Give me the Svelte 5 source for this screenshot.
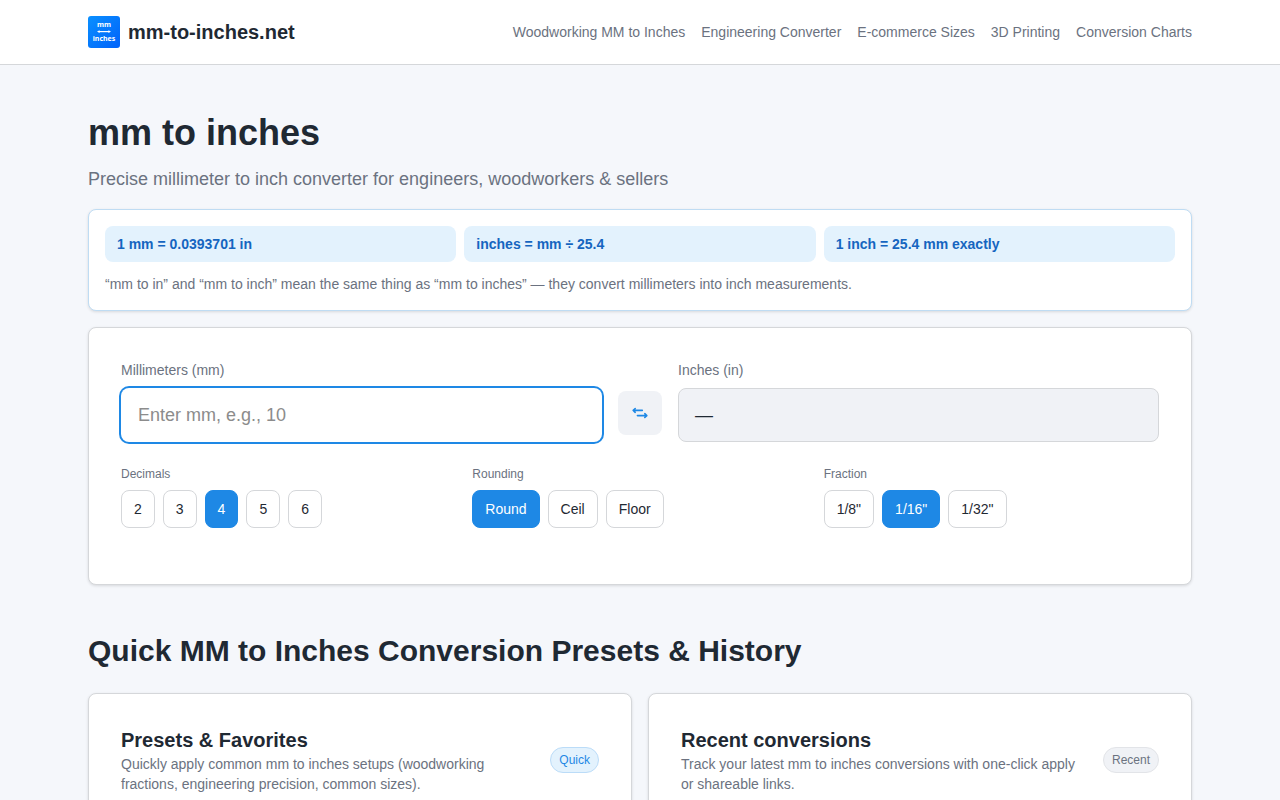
<script>
  const links = [
    "Woodworking MM to Inches",
    "Engineering Converter",
    "E-commerce Sizes",
    "3D Printing",
    "Conversion Charts",
  ];

  const facts = ["1 mm = 0.0393701 in", "inches = mm ÷ 25.4", "1 inch = 25.4 mm exactly"];

  const groups = [
    { key: "decimals", label: "Decimals", options: ["2", "3", "4", "5", "6"] },
    { key: "rounding", label: "Rounding", options: ["Round", "Ceil", "Floor"] },
    { key: "fraction", label: "Fraction", options: ['1/8"', '1/16"', '1/32"'] },
  ];

  const panels = [
    {
      title: "Presets & Favorites",
      text: "Quickly apply common mm to inches setups (woodworking fractions, engineering precision, common sizes).",
      badge: "Quick",
      accent: true,
    },
    {
      title: "Recent conversions",
      text: "Track your latest mm to inches conversions with one-click apply or shareable links.",
      badge: "Recent",
      accent: false,
    },
  ];

  let settings = $state({ decimals: "4", rounding: "Round", fraction: '1/16"' });
  let value = $state("");
  let reversed = $state(false);

  let output = $derived.by(() => {
    const n = parseFloat(value);
    if (isNaN(n)) return "—";
    const factor = 10 ** Number(settings.decimals);
    const raw = (reversed ? n * 25.4 : n / 25.4) * factor;
    const fn = Math[settings.rounding.toLowerCase()];
    return (fn(raw) / factor).toFixed(Number(settings.decimals));
  });
</script>

<div class="page">
  <header>
    <div class="container bar">
      <a class="brand" href="#top">
        <svg width="32" height="32" viewBox="0 0 32 32" aria-hidden="true">
          <defs>
            <linearGradient id="logo" x1="0" y1="0" x2="1" y2="1">
              <stop offset="0" stop-color="#0a90ff" />
              <stop offset="1" stop-color="#0062fa" />
            </linearGradient>
          </defs>
          <rect width="32" height="32" rx="3" fill="url(#logo)" />
          <text x="16" y="11.4" textLength="14" lengthAdjust="spacingAndGlyphs">mm</text>
          <path d="M10.5 15.6h11" stroke="#fff" stroke-width="1.2" />
          <path d="M9 15.6l2.6-1.4v2.8zM23 15.6l-2.6-1.4v2.8z" fill="#fff" />
          <text x="16" y="24.8" textLength="22.5" lengthAdjust="spacingAndGlyphs">inches</text>
        </svg>
        <span>mm-to-inches.net</span>
      </a>
      <nav>
        {#each links as link}
          <a href="#top">{link}</a>
        {/each}
      </nav>
    </div>
  </header>

  <main class="container">
    <h1>mm to inches</h1>
    <p class="lead">Precise millimeter to inch converter for engineers, woodworkers &amp; sellers</p>

    <section class="card summary">
      <div class="facts">
        {#each facts as fact}
          <div class="fact">{fact}</div>
        {/each}
      </div>
      <p>“mm to in” and “mm to inch” mean the same thing as “mm to inches” — they convert millimeters into inch measurements.</p>
    </section>

    <section class="card converter">
      <div class="fields">
        <div class="field">
          <label for="from">{reversed ? "Inches (in)" : "Millimeters (mm)"}</label>
          <input
            id="from"
            class="box"
            autocomplete="off"
            placeholder={reversed ? "Enter in, e.g., 1" : "Enter mm, e.g., 10"}
            bind:value />
        </div>
        <button class="swap" aria-label="Swap units" onclick={() => (reversed = !reversed)}>
          <svg width="16" height="16" viewBox="0 0 16 16" aria-hidden="true">
            <path d="M10.3 5.4H1.2M3.2 3.5L1.2 5.4l2 1.9M5.4 10.6h9.4M12.8 8.7l2 1.9-2 1.9" />
          </svg>
        </button>
        <div class="field">
          <span class="label">{reversed ? "Millimeters (mm)" : "Inches (in)"}</span>
          <output class="box result">{output}</output>
        </div>
      </div>

      <div class="groups">
        {#each groups as group}
          <div>
            <div class="group-label">{group.label}</div>
            <div class="options">
              {#each group.options as option}
                <button
                  class="option"
                  class:active={settings[group.key] === option}
                  onclick={() => (settings[group.key] = option)}>{option}</button>
              {/each}
            </div>
          </div>
        {/each}
      </div>
    </section>

    <h2>Quick MM to Inches Conversion Presets &amp; History</h2>

    <div class="panels">
      {#each panels as panel}
        <section class="card panel">
          <div>
            <h3>{panel.title}</h3>
            <p>{panel.text}</p>
          </div>
          <span class="badge" class:accent={panel.accent}>{panel.badge}</span>
        </section>
      {/each}
    </div>
  </main>
</div>

<style>
  :global(body) {
    margin: 0;
  }

  .page {
    height: 800px;
    overflow: hidden;
    background: #f5f7fb;
    color: #1f2933;
    font-family: "Liberation Sans", Arial, sans-serif;
    font-size: 14px;
    line-height: 20px;
  }

  .page * {
    box-sizing: border-box;
  }

  .container {
    width: 1104px;
    margin: 0 auto;
  }

  header {
    background: #fff;
    border-bottom: 1px solid #d5d7da;
  }

  .bar {
    display: flex;
    align-items: center;
    justify-content: space-between;
    height: 64px;
  }

  .brand {
    display: flex;
    align-items: center;
    gap: 8px;
    color: inherit;
    font-size: 20px;
    font-weight: 700;
    line-height: 28px;
    text-decoration: none;
  }

  .brand text {
    fill: #fff;
    font: 700 7px "Noto Sans", sans-serif;
    text-anchor: middle;
  }

  nav {
    display: flex;
    gap: 16px;
  }

  nav a {
    color: #6b7280;
    text-decoration: none;
  }

  main {
    padding-top: 48px;
  }

  h1,
  h2,
  h3,
  p {
    margin: 0;
  }

  h1 {
    font-size: 36px;
    line-height: 40px;
  }

  .lead {
    margin: 12px 0 16px;
    color: #6b7280;
    font-size: 18px;
    line-height: 28px;
  }

  .card {
    background: #fff;
    border: 1px solid #d5d7da;
    border-radius: 8px;
    box-shadow: 0 1px 3px rgba(0, 0, 0, 0.12);
  }

  .summary {
    padding: 16px;
    border-color: #bfdcf3;
  }

  .facts {
    display: grid;
    grid-template-columns: repeat(3, 1fr);
    gap: 8px;
    margin-bottom: 12px;
  }

  .fact {
    padding: 8px 12px;
    background: #e3f2fd;
    border-radius: 8px;
    color: #1565c0;
    font-weight: 700;
  }

  .summary p,
  .panel p {
    color: #6b7280;
  }

  .converter {
    margin-top: 16px;
    padding: 32px 32px 56px;
  }

  .fields {
    display: grid;
    grid-template-columns: 1fr 44px 1fr;
    gap: 16px;
    align-items: end;
  }

  .field {
    display: flex;
    flex-direction: column;
    gap: 8px;
    color: #6b7280;
  }

  .box {
    width: 100%;
    height: 54px;
    padding: 0 16px;
    background: #fff;
    border: 1px solid transparent;
    border-radius: 8px;
    box-shadow: 0 0 0 2px #1e88e5;
    color: #1f2933;
    font: 18px/52px "Liberation Sans", Arial, sans-serif;
    outline: none;
  }

  .box::placeholder {
    color: #8c8c8c;
    opacity: 1;
  }

  .result {
    background: #f0f2f6;
    border-color: #d5d7da;
    box-shadow: none;
  }

  .swap {
    display: grid;
    place-items: center;
    width: 44px;
    height: 44px;
    margin-bottom: 7px;
    padding: 0;
    background: #f0f2f6;
    border: 0;
    border-radius: 8px;
    cursor: pointer;
  }

  .swap path {
    fill: none;
    stroke: #1e88e5;
    stroke-width: 1.6;
    stroke-linecap: round;
    stroke-linejoin: round;
  }

  .groups {
    display: grid;
    grid-template-columns: repeat(3, 1fr);
    gap: 16px;
    margin-top: 24px;
  }

  .group-label {
    margin-bottom: 8px;
    color: #6b7280;
    font-size: 12px;
    line-height: 16px;
  }

  .options {
    display: flex;
    gap: 8px;
  }

  .option {
    padding: 8px 12px;
    background: #fff;
    border: 1px solid #d5d7da;
    border-radius: 8px;
    color: #1f2933;
    font: inherit;
    cursor: pointer;
  }

  .option.active {
    background: #1e88e5;
    border-color: #1e88e5;
    color: #fff;
  }

  h2 {
    margin: 48px 0 24px;
    font-size: 30px;
    line-height: 36px;
  }

  .panels {
    display: grid;
    grid-template-columns: 1fr 1fr;
    gap: 16px;
  }

  .panel {
    display: flex;
    align-items: center;
    justify-content: space-between;
    gap: 16px;
    padding: 32px;
  }

  h3 {
    font-size: 20px;
    line-height: 28px;
  }

  .badge {
    padding: 4px 8px;
    background: #f0f2f6;
    border: 1px solid #e2e4e8;
    border-radius: 999px;
    color: #6b7280;
    font-size: 12px;
    line-height: 16px;
  }

  .badge.accent {
    background: #e3f2fd;
    border-color: #bbdcf8;
    color: #1e88e5;
  }
</style>
